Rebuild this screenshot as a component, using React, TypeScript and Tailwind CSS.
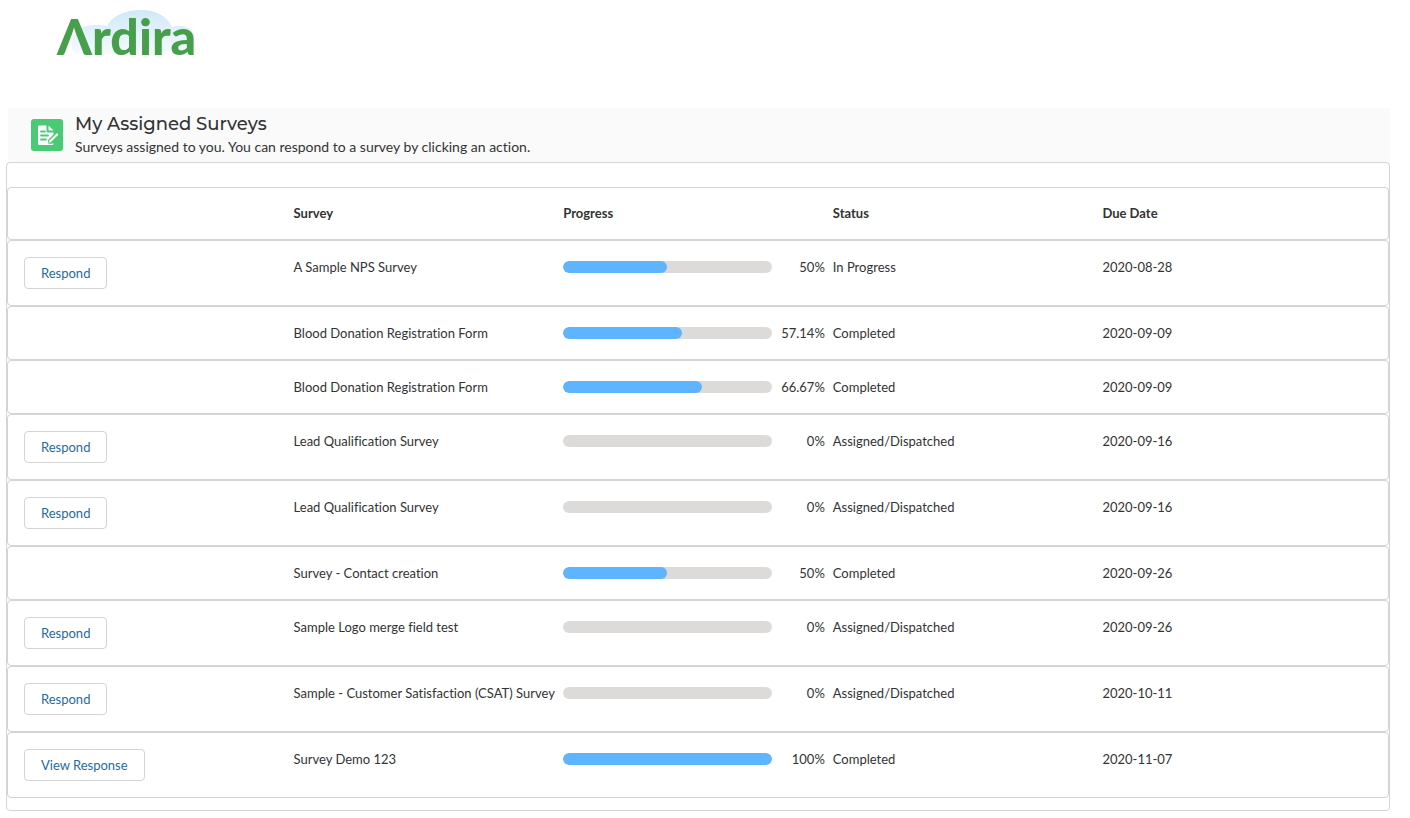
import React from 'react';

interface Survey {
  id: number;
  name: string;
  progress: number;
  status: string;
  dueDate: string;
  action?: string;
}

const columns = ['Survey', 'Progress', 'Status', 'Due Date'];

const surveys: Survey[] = [
  { id: 1, name: 'A Sample NPS Survey', progress: 50, status: 'In Progress', dueDate: '2020-08-28', action: 'Respond' },
  { id: 2, name: 'Blood Donation Registration Form', progress: 57.14, status: 'Completed', dueDate: '2020-09-09' },
  { id: 3, name: 'Blood Donation Registration Form', progress: 66.67, status: 'Completed', dueDate: '2020-09-09' },
  { id: 4, name: 'Lead Qualification Survey', progress: 0, status: 'Assigned/Dispatched', dueDate: '2020-09-16', action: 'Respond' },
  { id: 5, name: 'Lead Qualification Survey', progress: 0, status: 'Assigned/Dispatched', dueDate: '2020-09-16', action: 'Respond' },
  { id: 6, name: 'Survey - Contact creation', progress: 50, status: 'Completed', dueDate: '2020-09-26' },
  { id: 7, name: 'Sample Logo merge field test', progress: 0, status: 'Assigned/Dispatched', dueDate: '2020-09-26', action: 'Respond' },
  { id: 8, name: 'Sample - Customer Satisfaction (CSAT) Survey', progress: 0, status: 'Assigned/Dispatched', dueDate: '2020-10-11', action: 'Respond' },
  { id: 9, name: 'Survey Demo 123', progress: 100, status: 'Completed', dueDate: '2020-11-07', action: 'View Response' },
];

function Logo() {
  return (
    <svg viewBox="0 0 160 80" className="h-20 w-40" role="img" aria-label="Ardira">
      <defs>
        <linearGradient id="cloud" x1="0" y1="0" x2="0" y2="1">
          <stop offset="0" stopColor="#cfe9f7" />
          <stop offset="1" stopColor="#f6fbfe" />
        </linearGradient>
      </defs>
      <path
        d="M26 54c-4-3-5-7-4-12 1-10 10-17 22-17 5 0 9 0 13 1C62 16 75 10 91 10c15 0 26 6 31 17 10-3 19 0 22 7v20z"
        fill="url(#cloud)"
      />
      <text
        x="7"
        y="55"
        fill="#479f4c"
        className="font-[Lato,sans-serif] text-[50px] font-black"
      >
        Λrdira
      </text>
    </svg>
  );
}

function SurveyIcon() {
  return (
    <svg viewBox="0 0 32 32" className="size-8 shrink-0" aria-hidden="true">
      <rect width="32" height="32" rx="3" fill="#4bca76" />
      <path d="M8.500 6.500H15.500v5.500a1.500 1.500 0 0 0 1.500 1.500H22.500v3l-4.500 4.500-1 3.500H22.500c0 1-.6 1.500-1.500 1.500h-12.500C7.600 26 7 25.500 7 24.500V8C7 7.100 7.600 6.500 8.500 6.500z" fill="#fff" />
      <path d="M17.500 6.500l5 5h-4c-.6 0-1-.4-1-1z" fill="#fff" />
      <path d="M10 12.500h4M10 16.500h7M10 20.500h5" stroke="#4bca76" strokeWidth="1.800" strokeLinecap="round" />
      <path d="M19.500 22l6.500-6.500" stroke="#4bca76" strokeWidth="5" strokeLinecap="round" />
      <path d="M20 21.500l6-6" stroke="#fff" strokeWidth="2.200" strokeLinecap="round" />
      <path d="M18.500 21l2 2-2.700.8z" fill="#fff" />
    </svg>
  );
}

function ProgressBar({ value, label }: { value: number; label: string }) {
  return (
    <div className="flex items-center">
      <div
        role="progressbar"
        aria-label={label}
        aria-valuenow={value}
        aria-valuemin={0}
        aria-valuemax={100}
        className="h-3 flex-1 overflow-hidden rounded-full bg-[#dddbda]"
      >
        <div className="h-full rounded-full bg-[#5eb4ff]" style={{ width: `${value}%` }} />
      </div>
      <span className="w-[53px] text-right">{value}%</span>
    </div>
  );
}

const rowClass = 'grid grid-cols-5 rounded border border-[#d4d4d4] px-4 py-4';

export default function App() {
  return (
    <div className="bg-white pb-2 pl-1.5 pr-5 font-[Lato,sans-serif] text-[13px] leading-5 text-[#333333] [font-variant-ligatures:none]">
      {/* Logo */}
      <header className="h-[108px] pl-11">
        <Logo />
      </header>

      <main>
        {/* Page title */}
        <div className="ml-0.5 flex h-[54px] items-center gap-3 bg-[#fafafa] pl-[23px]">
          <SurveyIcon />
          <div>
            <h1 className="font-[Montserrat,Inter,sans-serif] text-lg font-medium leading-6">My Assigned Surveys</h1>
            <p className="text-sm leading-[22px]">
              Surveys assigned to you. You can respond to a survey by clicking an action.
            </p>
          </div>
        </div>

        {/* Survey list */}
        <section className="rounded border border-[#d4d4d4] pb-3 pt-6">
          <table className="block">
            <thead className="block">
              <tr className={`${rowClass} leading-[19px]`}>
                <th scope="col" aria-label="Action" />
                {columns.map((column) => (
                  <th key={column} scope="col" className="text-left font-bold">
                    {column}
                  </th>
                ))}
              </tr>
            </thead>
            <tbody className="block">
              {surveys.map((survey) => (
                <tr key={survey.id} className={rowClass}>
                  <td>
                    {survey.action && (
                      <button
                        type="button"
                        className="block h-8 rounded border border-[#d4d4d4] bg-white px-4 text-[#1f6ba5]"
                      >
                        {survey.action}
                      </button>
                    )}
                  </td>
                  <td className="whitespace-nowrap pr-2">{survey.name}</td>
                  <td className="pr-2">
                    <ProgressBar value={survey.progress} label={survey.name} />
                  </td>
                  <td>{survey.status}</td>
                  <td>{survey.dueDate}</td>
                </tr>
              ))}
            </tbody>
          </table>
        </section>
      </main>
    </div>
  );
}
